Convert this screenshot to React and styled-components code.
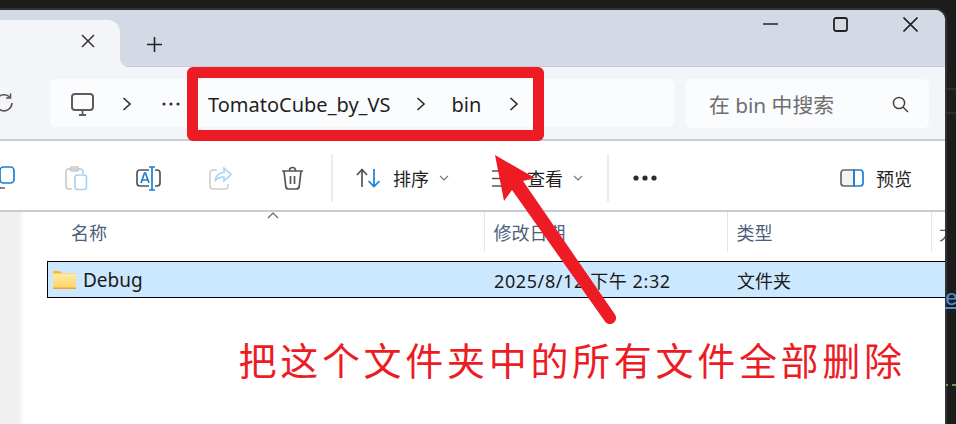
import React from 'react';
import styled, { createGlobalStyle } from 'styled-components';

const uiFont = `"Noto Sans", "Noto Sans CJK SC", sans-serif`;

const Global = createGlobalStyle`
  html, body {
    margin: 0;
    padding: 0;
    background: #1c1c1c;
  }
  * {
    box-sizing: border-box;
  }
`;

const Page = styled.div`
  position: relative;
  display: flex;
  width: 956px;
  height: 424px;
  overflow: hidden;
  padding-top: 10px;
  background: #1c1c1c;
  font-family: ${uiFont};
`;

const Window = styled.div`
  position: relative;
  display: flex;
  flex-direction: column;
  width: 945px;
  height: 414px;
  overflow: hidden;
  border-top-right-radius: 10px;
  background: #fff;
`;

const WindowFrame = styled.div`
  flex: 0 0 945px;
  height: 414px;
  border-top-right-radius: 10px;
  box-shadow: 0 0 0 2px #333;
`;

const EditorEdge = styled.div`
  flex: 1;
  min-width: 0;
  display: flex;
  flex-direction: column;
  overflow: hidden;
  padding-left: 1px;
  font-family: "Liberation Mono", monospace;
`;

const EdgeLine = styled.div`
  flex: 0 0 2px;
  margin-top: ${(p) => p.$top}px;
  background: #2e2e2e;
`;

const EdgeDash = styled.div`
  flex: 0 0 2px;
  margin-top: 70px;
  background: repeating-linear-gradient(90deg, #6a9955 0 2px, transparent 2px 6px, #6a9955 6px 20px);
`;

const EdgeLink = styled.div`
  flex: 0 0 28px;
  margin-top: 172px;
  margin-left: -1px;
  line-height: 28px;
  font-size: 22px;
  color: #4f8fce;
  text-decoration: underline;
`;

const TabStrip = styled.div`
  display: flex;
  align-items: flex-end;
  flex: 0 0 57px;
  background: #d3dae5;
  border-bottom: 1px solid #c5ccd6;
`;

const Tab = styled.div`
  position: relative;
  display: flex;
  align-items: center;
  justify-content: flex-end;
  width: 120px;
  height: 47px;
  margin-bottom: -1px;
  padding: 0 25px 6px 0;
  background: #f3f5f9;
  border-top-right-radius: 12px;

  &::after {
    content: '';
    position: absolute;
    left: 100%;
    bottom: 0;
    width: 8px;
    height: 8px;
    background: radial-gradient(circle at 100% 0, transparent 7.5px, #f3f5f9 8px);
  }
`;

const NewTab = styled.svg`
  margin: 0 0 14px 27px;
`;

const Caption = styled.div`
  display: flex;
  align-items: center;
  margin-left: auto;
  height: 100%;
  padding: 0 27px 28px 0;
  gap: 55px;
`;

const NavBar = styled.div`
  flex: 0 0 74px;
  display: flex;
  align-items: center;
  gap: 12px;
  padding: 0 16px 0 0;
  background: #f3f5f9;
  border-bottom: 2px solid #c5ccd6;
`;

const Refresh = styled.svg`
  margin-left: -6px;
  margin-right: 24px;
`;

const Address = styled.div`
  flex: 0 0 624px;
  display: flex;
  align-items: center;
  height: 48px;
  border-radius: 6px;
  background: #fbfcfe;
  padding: 2px 0 0 21px;
`;

const Crumb = styled.div`
  display: flex;
  align-items: center;
  margin-left: ${(p) => p.$gap || 0}px;
  font-size: 20px;
  color: #1f1f1f;
  white-space: nowrap;
`;

const Search = styled.div`
  flex: 1;
  display: flex;
  align-items: center;
  justify-content: space-between;
  height: 49px;
  padding: 2px 20px 0 23px;
  border-radius: 6px;
  background: #fbfcfe;
  font-size: 20.8px;
  color: #6e6e6e;
`;

const Toolbar = styled.div`
  flex: 0 0 71px;
  display: flex;
  align-items: center;
  padding: 5px 33px 0 0;
  background: #fff;
  border-bottom: 2px solid #c5ccd6;
`;

const ToolIcon = styled.div`
  flex: 0 0 72px;
  display: flex;
  justify-content: center;
  margin-left: ${(p) => p.$gap || 0}px;
`;

const Divider = styled.div`
  flex: 0 0 2px;
  height: 48px;
  margin-left: ${(p) => p.$gap}px;
  background: #ececec;
`;

const ToolAction = styled.div`
  display: flex;
  align-items: center;
  margin-left: ${(p) => (p.$push ? 'auto' : `${p.$gap}px`)};
  font-size: 18px;
  color: #1f1f1f;
  white-space: nowrap;
`;

const ToolLabel = styled.span`
  margin: 0 10px 0 12px;
`;

const PreviewLabel = styled.span`
  margin-left: 12px;
`;

const Body = styled.div`
  flex: 1;
  display: flex;
  min-height: 0;
`;

const Sidebar = styled.div`
  flex: 0 0 23px;
  background: #f0f0f0;
  border-right: 3px solid #f7f7f7;
`;

const Files = styled.div`
  flex: 1;
  min-width: 0;
  display: flex;
  flex-direction: column;
  background: #fff;
`;

const HeaderRow = styled.div`
  position: relative;
  display: grid;
  grid-template-columns: 437px 243px 204px 40px;
  margin-left: 24px;
  height: 40px;
  overflow: hidden;
`;

const HeaderCell = styled.div`
  height: 40px;
  padding-left: ${(p) => p.$pad}px;
  line-height: 42px;
  font-size: 18px;
  color: #4c607a;
  white-space: nowrap;
  border-left: ${(p) => (p.$first ? 'none' : '1.5px solid #e6e6e6')};
`;

const SortCaret = styled.svg`
  position: absolute;
  top: 0;
  left: 220px;
`;

const FileRow = styled.div`
  display: grid;
  grid-template-columns: 436px 243px 204px 40px;
  align-items: center;
  height: 37px;
  margin: 9px 0 0 24px;
  background: #cce8ff;
  border: 1px solid #000;
  border-right: none;
  font-size: 18px;
  color: #1a1a1a;
  white-space: nowrap;
`;

const NameCell = styled.div`
  display: flex;
  align-items: center;
  gap: 7px;
  padding-left: 5px;
`;

const FileName = styled.span`
  font-size: 19px;
`;

const Cell = styled.div`
  padding-left: 10px;
  letter-spacing: ${(p) => p.$spacing || 0}px;
`;

const Annotation = styled.div`
  margin: 36px 0 0 215.500px;
  font-family: "Noto Sans CJK SC", sans-serif;
  font-size: 38px;
  line-height: 50px;
  letter-spacing: 3.700px;
  color: #ed1c24;
  white-space: nowrap;
`;

const RedBox = styled.div`
  position: absolute;
  top: 57px;
  left: 187px;
  width: 357px;
  height: 74px;
  border: 11px solid #ed1c24;
  border-radius: 6px;
`;

const ArrowLayer = styled.svg`
  position: absolute;
  top: 0;
  left: 0;
  pointer-events: none;
`;

const Chevron = () => (
  <svg width="10" height="14" viewBox="0 0 10 14" fill="none" stroke="#333" strokeWidth="1.7">
    <path d="M1.5 1l6.5 6-6.5 6" />
  </svg>
);

const Dots = ({ color = '#333', r = 1.6, w = 18, step = 7 }) => (
  <svg width={w} height="8" viewBox={`0 0 ${w} 8`} fill={color}>
    <circle cx={w / 2 - step} cy="4" r={r} />
    <circle cx={w / 2} cy="4" r={r} />
    <circle cx={w / 2 + step} cy="4" r={r} />
  </svg>
);

const SmallChevron = () => (
  <svg width="10" height="8" viewBox="0 0 10 8" fill="none" stroke="#777" strokeWidth="1.1">
    <path d="M1 2l4 4 4-4" />
  </svg>
);

const FolderIcon = () => (
  <svg width="23" height="18" viewBox="0 0 23 18">
    <defs>
      <linearGradient id="folderBody" x1="0" y1="0" x2="0" y2="1">
        <stop offset="0" stopColor="#ffe9a8" />
        <stop offset="1" stopColor="#fdd262" />
      </linearGradient>
    </defs>
    <path d="M0 1.5C0 .7.6 0 1.4 0h5.4l2.4 2.2H23V5H0z" fill="#fbb91f" />
    <rect x="0" y="2.6" width="23" height="15" rx="1" fill="url(#folderBody)" />
    <rect x="0" y="16.6" width="23" height="1.4" fill="#e9ac28" />
  </svg>
);

export default function App() {
  return (
    <>
      <Global />
      <Page>
        <WindowFrame>
          <Window>
            <TabStrip>
              <Tab>
                <svg width="14" height="14" viewBox="0 0 14 14" stroke="#333" strokeWidth="1.5">
                  <path d="M1 1l12 12M13 1L1 13" />
                </svg>
              </Tab>
              <NewTab width="15" height="15" viewBox="0 0 15 15" stroke="#222" strokeWidth="1.6">
                <path d="M7.5 0v15M0 7.5h15" />
              </NewTab>
              <Caption>
                <svg width="15" height="2" viewBox="0 0 15 2" stroke="#222" strokeWidth="1.6">
                  <path d="M0 1h15" />
                </svg>
                <svg width="15" height="15" viewBox="0 0 15 15" fill="none" stroke="#222" strokeWidth="1.8">
                  <rect x="1" y="1" width="13" height="13" rx="2" />
                </svg>
                <svg width="15" height="15" viewBox="0 0 15 15" stroke="#222" strokeWidth="1.6">
                  <path d="M.5.5l14 14M14.500.5l-14 14" />
                </svg>
              </Caption>
            </TabStrip>

            <NavBar>
              <Refresh width="20" height="20" viewBox="0 0 20 20" fill="none" stroke="#555" strokeWidth="1.6">
                <path d="M16 4.5A8 8 0 1 0 18 10" />
                <path d="M16.5 0.5v4.5h-4.5" />
              </Refresh>
              <Address>
                <svg width="23" height="23" viewBox="0 0 23 23" fill="none" stroke="#5c5c5c" strokeWidth="2">
                  <rect x="1" y="1" width="21" height="16" rx="3" />
                  <path d="M8 22h7M11.5 17v5" strokeWidth="1.8" />
                </svg>
                <Crumb $gap={28}><Chevron /></Crumb>
                <Crumb $gap={30}><Dots /></Crumb>
                <Crumb $gap={28}>TomatoCube_by_VS</Crumb>
                <Crumb $gap={26}><Chevron /></Crumb>
                <Crumb $gap={25}>bin</Crumb>
                <Crumb $gap={28}><Chevron /></Crumb>
              </Address>
              <Search>
                <span>在 bin 中搜索</span>
                <svg width="17" height="17" viewBox="0 0 17 17" fill="none" stroke="#444" strokeWidth="1.5">
                  <circle cx="7" cy="7" r="5.6" />
                  <path d="M11 11l5 5" />
                </svg>
              </Search>
            </NavBar>

            <Toolbar>
              <ToolIcon $gap={-32}>
                <svg width="24" height="24" viewBox="0 0 24 24" fill="none" strokeWidth="1.7">
                  <rect x="8" y="1" width="14" height="16" rx="3.5" stroke="#1b7fd6" />
                  <path d="M4 15c0 4 2 7 6 7h3" stroke="#666" />
                </svg>
              </ToolIcon>
              <ToolIcon>
                <svg width="23" height="25" viewBox="0 0 23 25" fill="none" strokeWidth="1.6">
                  <path d="M7 23H4a3 3 0 0 1-3-3V6a3 3 0 0 1 3-3h11a3 3 0 0 1 3 3v2" stroke="#c8c8c8" />
                  <rect x="5.5" y="1" width="8" height="4" rx="1.5" stroke="#c8c8c8" />
                  <rect x="10" y="9" width="11.5" height="14.5" rx="2.5" stroke="#a6d3f5" />
                </svg>
              </ToolIcon>
              <ToolIcon>
                <svg width="25" height="25" viewBox="0 0 25 25" fill="none" strokeWidth="1.7">
                  <path d="M13 4H4a3 3 0 0 0-3 3v10a3 3 0 0 0 3 3h9M19 4h2a3 3 0 0 1 3 3v10a3 3 0 0 1-3 3h-2" stroke="#555" />
                  <path d="M5 17l3.5-10h1L13 17M6.3 14h5.4M16 1v23M13 1h6M13 24h6" stroke="#1b7fd6" />
                </svg>
              </ToolIcon>
              <ToolIcon>
                <svg width="23" height="23" viewBox="0 0 23 23" fill="none" strokeWidth="1.6">
                  <path d="M8 3H4a3 3 0 0 0-3 3v13a3 3 0 0 0 3 3h12a3 3 0 0 0 3-3v-2" stroke="#cfcfcf" />
                  <path d="M15 1l7 6.5-7 6.5v-4c-4 0-7 1-9 4 .5-5 4-8 9-8.500z" stroke="#a6d3f5" />
                </svg>
              </ToolIcon>
              <ToolIcon>
                <svg width="23" height="24" viewBox="0 0 23 24" fill="none" stroke="#555" strokeWidth="1.7">
                  <path d="M1 5h21M8.500 4.500c0-4 6-4 6 0M3 5l1.800 15.500a3 3 0 0 0 3 2.500h7.400a3 3 0 0 0 3-2.500L20 5M9.500 10v8M13.500 10v8" />
                </svg>
              </ToolIcon>
              <Divider $gap={3} />
              <ToolAction $gap={23}>
                <svg width="25" height="20" viewBox="0 0 25 20" fill="none" strokeWidth="1.7">
                  <path d="M6 19V1.500M1 7l5-5.500L11 7" stroke="#555" />
                  <path d="M18 1v17.500M12.500 13l5.500 5.500 5.500-5.500" stroke="#1b7fd6" />
                </svg>
                <ToolLabel>排序</ToolLabel>
                <SmallChevron />
              </ToolAction>
              <ToolAction $gap={43}>
                <svg width="23" height="17" viewBox="0 0 23 17" stroke="#555" strokeWidth="1.600">
                  <path d="M0 1h23M0 8.500h23M0 16h23" />
                </svg>
                <ToolLabel>查看</ToolLabel>
                <SmallChevron />
              </ToolAction>
              <Divider $gap={24} />
              <ToolAction $gap={23}>
                <Dots color="#2b2b2b" r={2.600} w={26} step={9} />
              </ToolAction>
              <ToolAction $push>
                <svg width="24" height="18" viewBox="0 0 24 18" fill="none" strokeWidth="1.700">
                  <path d="M14 1H4a3 3 0 0 0-3 3v10a3 3 0 0 0 3 3h10z" fill="#f3f3f3" stroke="#666" />
                  <path d="M14 1h6a3 3 0 0 1 3 3v10a3 3 0 0 1-3 3h-6z" stroke="#1b7fd6" />
                </svg>
                <PreviewLabel>预览</PreviewLabel>
              </ToolAction>
            </Toolbar>

            <Body>
              <Sidebar />
              <Files>
                <HeaderRow>
                  <HeaderCell $first $pad={24}>名称</HeaderCell>
                  <HeaderCell $pad={8.5}>修改日期</HeaderCell>
                  <HeaderCell $pad={8.5}>类型</HeaderCell>
                  <HeaderCell $pad={7}>大小</HeaderCell>
                  <SortCaret width="12" height="7" viewBox="0 0 12 7" fill="none" stroke="#666" strokeWidth="1.200">
                    <path d="M1 6l5-5 5 5" />
                  </SortCaret>
                </HeaderRow>
                <FileRow>
                  <NameCell>
                    <FolderIcon />
                    <FileName>Debug</FileName>
                  </NameCell>
                  <Cell $spacing={0.6}>2025/8/12 下午 2:32</Cell>
                  <Cell>文件夹</Cell>
                  <Cell />
                </FileRow>
                <Annotation>把这个文件夹中的所有文件全部删除</Annotation>
              </Files>
            </Body>

            <RedBox />
          </Window>
        </WindowFrame>

        <EditorEdge>
          <EdgeLine $top={78} />
          <EdgeLine $top={22} />
          <EdgeLink>e</EdgeLink>
          <EdgeDash />
        </EditorEdge>

        <ArrowLayer width="956" height="424" viewBox="0 0 956 424">
          <path
            d="M495 155L535 178 523 181 615 314.600A6 6 0 0 1 605 321.400L512 190 504 201z"
            fill="#ed1c24"
          />
        </ArrowLayer>
      </Page>
    </>
  );
}
